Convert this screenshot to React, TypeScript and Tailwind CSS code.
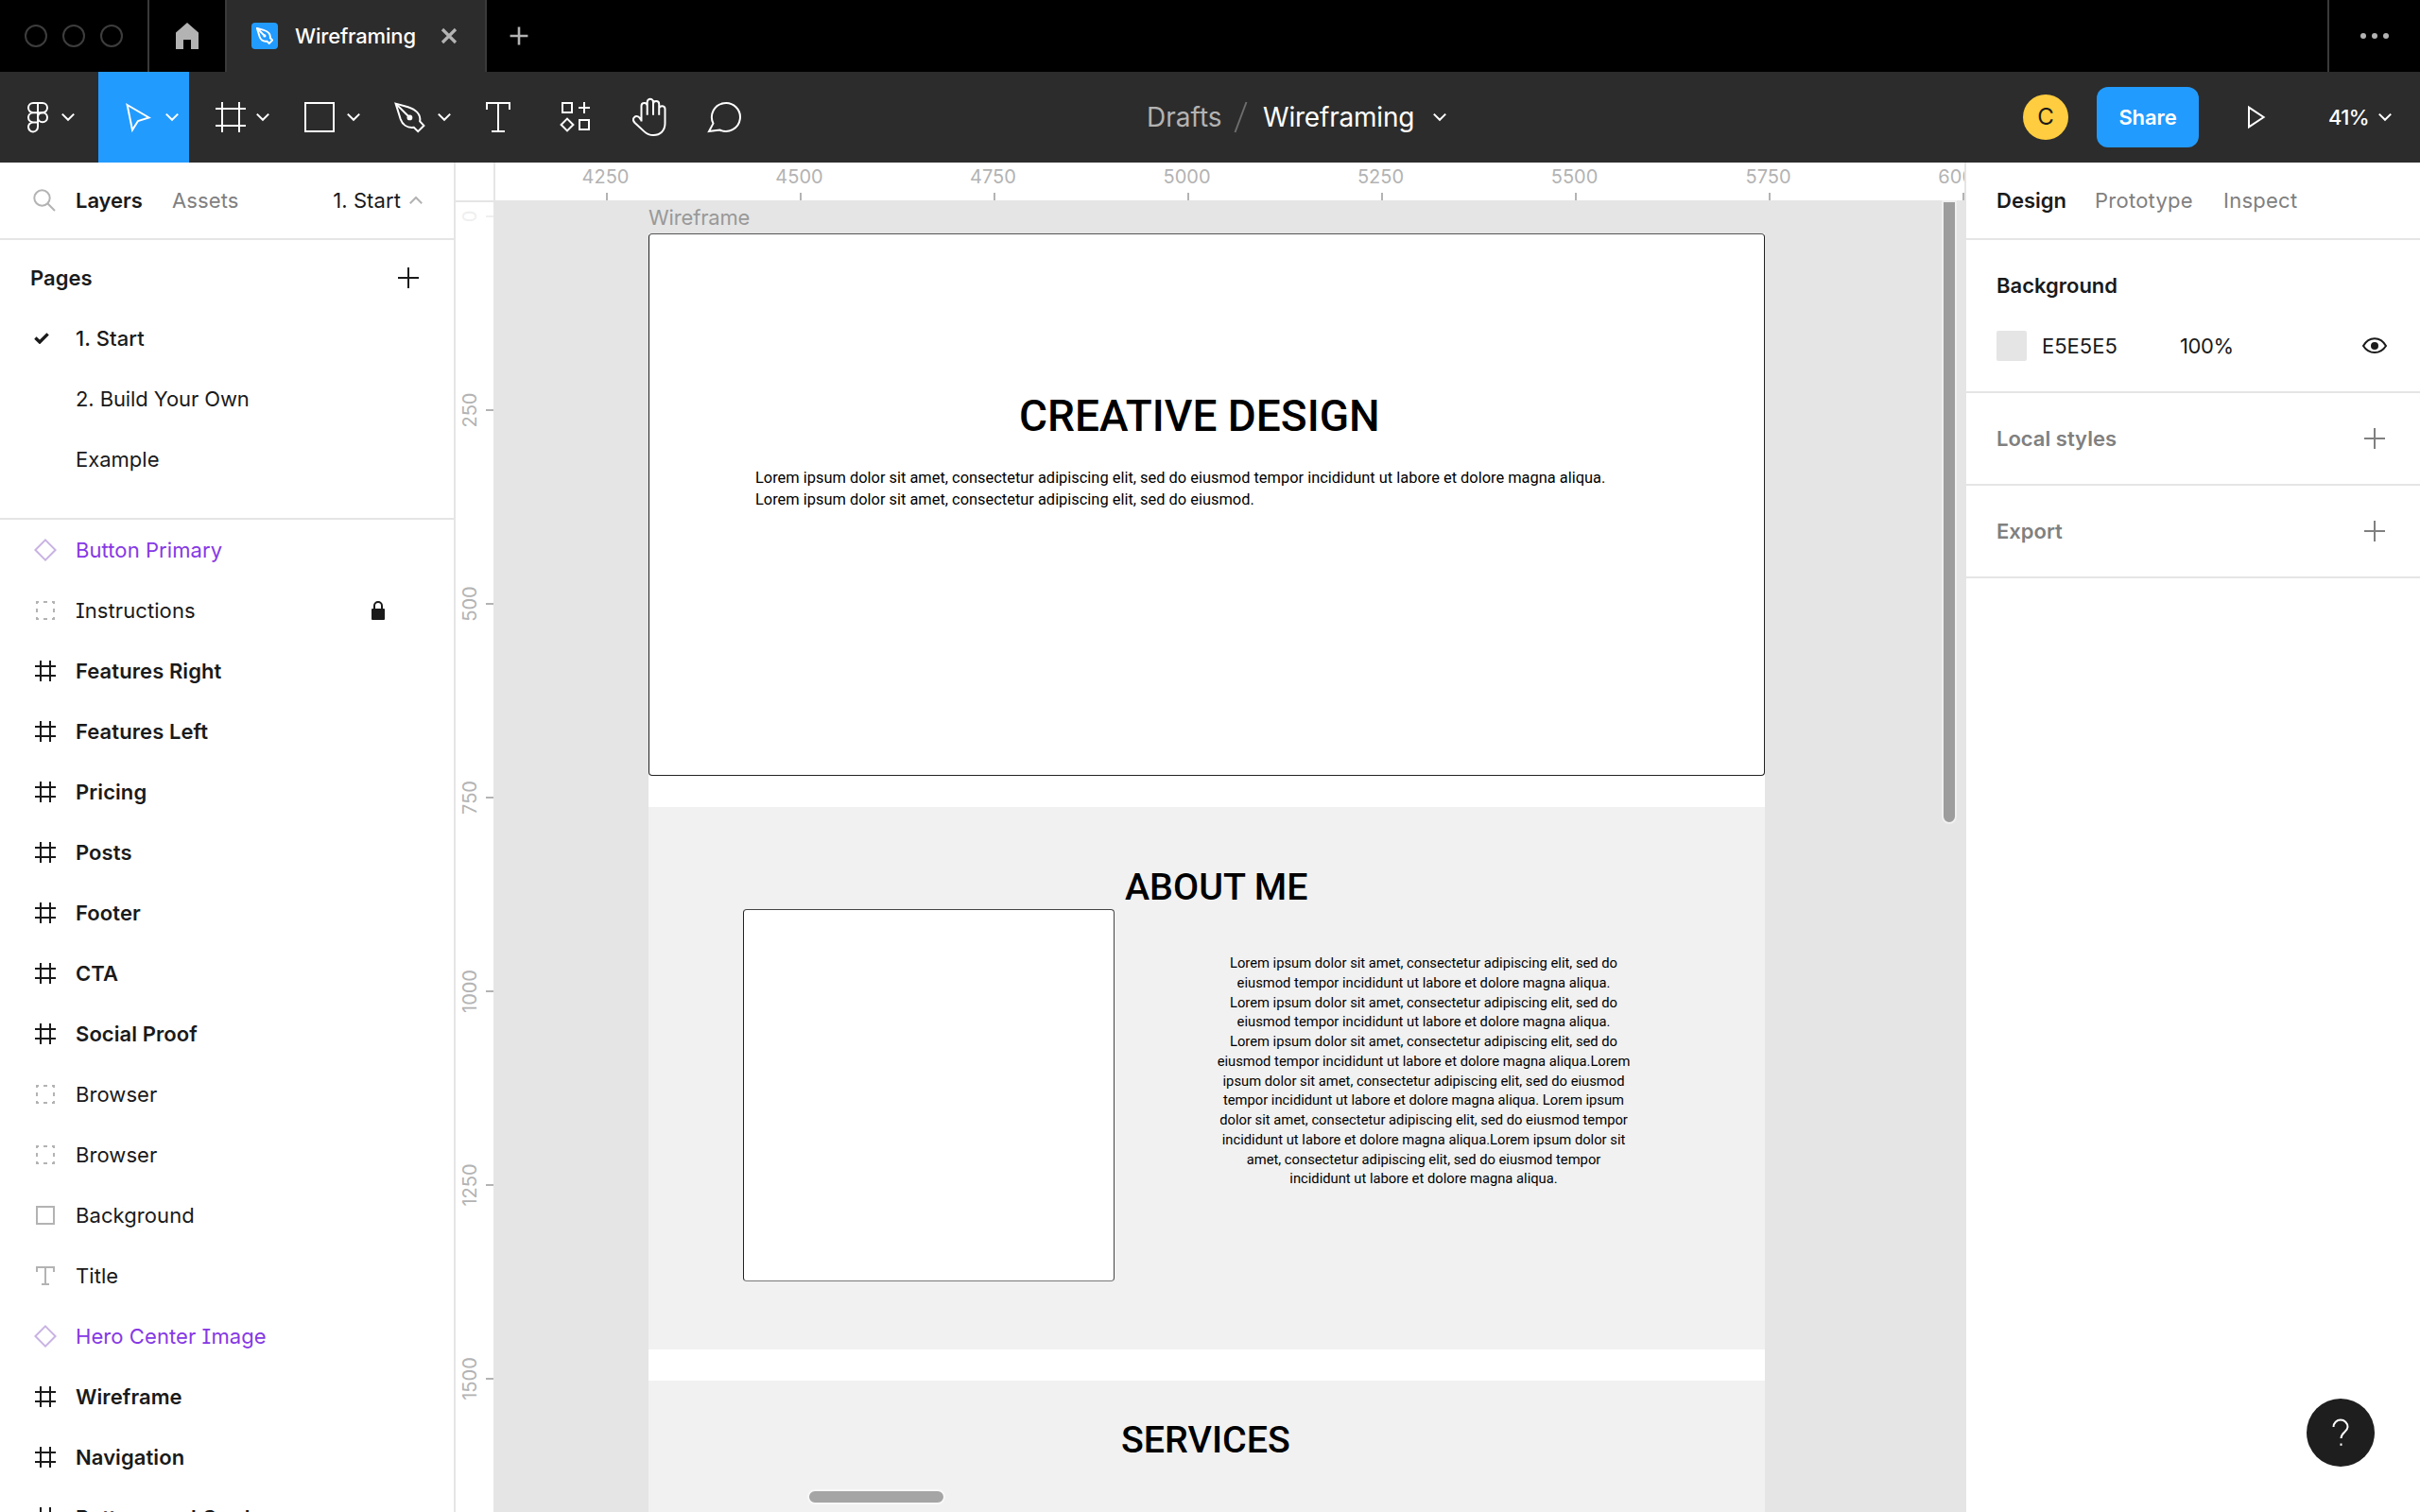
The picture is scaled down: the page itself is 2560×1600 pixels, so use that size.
import type { ReactNode } from "react";

type IconProps = { box: string; className: string; children: ReactNode };

function Icon({ box, className, children }: IconProps) {
  return (
    <svg viewBox={box} className={className} fill="none" stroke="currentColor" strokeWidth={2}>
      {children}
    </svg>
  );
}

function Chevron({ className = "" }: { className?: string }) {
  return (
    <Icon box="0 0 16 10" className={"h-[10px] w-[16px] shrink-0 " + className}>
      <path d="M1.8 1.6 8 7.8l6.2-6.2" />
    </Icon>
  );
}

function PenShape() {
  return (
    <>
      <path d="M1.6 1.6 14.6 5.3C22.6 7.8 28.3 13 27.2 20.4L31.4 24.9 25.2 31.1 20.8 26.8C13.4 27.8 8.6 23.4 6.6 17.8Z" />
      <path d="M1.6 1.6 16 16" />
      <circle cx="16.4" cy="16.4" r="2.9" fill="currentColor" stroke="none" />
    </>
  );
}

function TabBar() {
  return (
    <header className="flex h-[76px] shrink-0 bg-black text-[#b3b3b3]">
      <div className="flex w-[158px] items-center gap-[16px] border-r-2 border-[#3a3a3a] pl-[26px]">
        <span className="size-[24px] rounded-full border-2 border-[#3d3d3d]" />
        <span className="size-[24px] rounded-full border-2 border-[#3d3d3d]" />
        <span className="size-[24px] rounded-full border-2 border-[#3d3d3d]" />
      </div>
      <div className="flex w-[82px] items-center justify-center border-r-2 border-[#3a3a3a]">
        <svg viewBox="0 0 24 28" className="h-[28px] w-[24px]" fill="currentColor">
          <path d="M12 0 24 10.5V28H16V18H8V28H0V10.5Z" />
        </svg>
      </div>
      <div className="flex w-[275px] items-center border-r-2 border-[#3a3a3a] bg-[#2c2c2c] pl-[26px]">
        <div className="flex size-[28px] items-center justify-center rounded-[4px] bg-[#229bff] text-white">
          <svg viewBox="0 0 33 33" className="size-[18px]" fill="none" stroke="currentColor" strokeWidth={3.6}>
            <PenShape />
          </svg>
        </div>
        <span className="ml-[18px] w-[128px] whitespace-nowrap text-[22px] font-medium tracking-[-0.18px] text-white">
          Wireframing
        </span>
        <Icon box="0 0 18 18" className="ml-[26px] size-[18px]">
          <path d="M2 2 16 16M16 2 2 16" strokeWidth={3.2} />
        </Icon>
      </div>
      <Icon box="0 0 20 20" className="ml-[24px] size-[20px] self-center">
        <path d="M10 .6V19.4M.6 10H19.4" strokeWidth={2.6} />
      </Icon>
      <div className="ml-auto flex w-[98px] items-center gap-[6px] border-l-2 border-[#3a3a3a] pl-[33px]">
        <span className="size-[6px] rounded-full bg-[#b3b3b3]" />
        <span className="size-[6px] rounded-full bg-[#b3b3b3]" />
        <span className="size-[6px] rounded-full bg-[#b3b3b3]" />
      </div>
    </header>
  );
}

function Toolbar() {
  return (
    <div className="flex h-[96px] shrink-0 items-center bg-[#2c2c2c] text-white">
      <div className="flex h-full w-[104px] items-center pl-[28px]">
        <Icon box="28 107 24 34" className="h-[34px] w-[24px]">
          <path d="M35.1 109H44.9A5.1 5.1 0 0 1 44.9 119.2H35.1A5.1 5.1 0 0 1 35.1 109ZM40 109V134.3A5 5 0 1 1 35.1 129.4H40M35.1 119.2A5.1 5.1 0 0 0 35.1 129.4" />
          <circle cx="45" cy="124.3" r="5" />
        </Icon>
        <Chevron className="ml-[12px]" />
      </div>
      <div className="flex h-full w-[96px] items-center bg-[#229bff] pl-[28px]">
        <Icon box="132 107 28 34" className="h-[34px] w-[28px]">
          <path d="M134.6 111 157.6 124.5 146 128 140 137.6Z" />
        </Icon>
        <Chevron className="ml-[14px]" />
      </div>
      <div className="flex h-full w-[96px] items-center pl-[28px]">
        <Icon box="228 108 32 32" className="size-[32px]">
          <path d="M228 115H260M228 133H260M235 108V140M253 108V140" />
        </Icon>
        <Chevron className="ml-[10px]" />
      </div>
      <div className="flex h-full w-[96px] items-center pl-[26px]">
        <Icon box="0 0 32 32" className="size-[32px]">
          <path d="M1 1H31V31H1Z" />
        </Icon>
        <Chevron className="ml-[12px]" />
      </div>
      <div className="flex h-full w-[96px] items-center pl-[25px]">
        <Icon box="0 0 33 33" className="size-[33px]">
          <PenShape />
        </Icon>
        <Chevron className="ml-[12px]" />
      </div>
      <div className="flex w-[80px] justify-center pr-[2px]">
        <Icon box="0 0 26 32" className="h-[32px] w-[26px]">
          <path d="M1 8V1H25V8M13 1V31M6 31H20" />
        </Icon>
      </div>
      <div className="flex w-[80px] justify-center">
        <Icon box="592 107 32 34" className="h-[34px] w-[32px]">
          <path d="M595 109H605V119H595ZM618 108V120M612 114H624M613 127H623V137H613ZM600 125.6 606.4 132 600 138.4 593.6 132Z" />
        </Icon>
      </div>
      <div className="flex w-[80px] justify-center pr-[2px]">
        <Icon box="669 103 36 42" className="h-[42px] w-[36px]">
          <path d="M678.5 128.5V112A3.1 3.1 0 0 1 684.7 112M684.7 121.8V108A3.1 3.1 0 0 1 691 108V121.8M691 110A3.1 3.1 0 0 1 697.2 110V121.8M697.2 115.3A3.1 3.1 0 0 1 703.5 115.3V130.5C703.5 138.4 698.3 143 691.3 143 687.4 143 684.4 142 682 139.6L671.6 130C667.4 125.6 672.6 120.6 676.4 124.4L678.5 127.5" />
        </Icon>
      </div>
      <div className="flex w-[80px] justify-center pr-[4px]">
        <Icon box="748 107 37 34" className="h-[34px] w-[37px]">
          <path d="M754.5 130.6A15 15 0 1 1 761.5 137.5L750 139Z" />
        </Icon>
      </div>
      <div className="ml-[405px] flex items-center text-[28px]">
        <span className="w-[79px] text-[#b3b3b3]">Drafts</span>
        <Icon box="0 0 16 34" className="ml-[13px] h-[34px] w-[16px] text-[#6e6e6e]">
          <path d="M1.5 33 13.5 1" />
        </Icon>
        <span className="ml-[15px] w-[159px] whitespace-nowrap tracking-[-0.2px]">Wireframing</span>
        <Chevron className="ml-[20px]" />
      </div>
      <div className="ml-auto flex items-center">
        <span className="flex size-[48px] items-center justify-center rounded-full bg-[#ffcd3f] text-[24px] text-[#1a1a1a]">C</span>
        <span className="ml-[30px] flex h-[64px] w-[108px] items-center justify-center rounded-[12px] bg-[#229bff] text-[22px] font-semibold tracking-[-0.1px]">
          Share
        </span>
        <Icon box="0 0 20 26" className="ml-[51px] h-[26px] w-[20px]">
          <path d="M2 2.6 17.6 13 2 23.4Z" />
        </Icon>
        <span className="ml-[66px] w-[42px] whitespace-nowrap text-[22px] font-medium tracking-[-0.6px]">41%</span>
        <Chevron className="mr-[29px] ml-[10px]" />
      </div>
    </div>
  );
}

type Kind = "component" | "group" | "frame" | "rect" | "text";

const layers: { name: string; kind: Kind; locked?: boolean }[] = [
  { name: "Button Primary", kind: "component" },
  { name: "Instructions", kind: "group", locked: true },
  { name: "Features Right", kind: "frame" },
  { name: "Features Left", kind: "frame" },
  { name: "Pricing", kind: "frame" },
  { name: "Posts", kind: "frame" },
  { name: "Footer", kind: "frame" },
  { name: "CTA", kind: "frame" },
  { name: "Social Proof", kind: "frame" },
  { name: "Browser", kind: "group" },
  { name: "Browser", kind: "group" },
  { name: "Background", kind: "rect" },
  { name: "Title", kind: "text" },
  { name: "Hero Center Image", kind: "component" },
  { name: "Wireframe", kind: "frame" },
  { name: "Navigation", kind: "frame" },
  { name: "Buttons and Cards", kind: "frame" },
];

function LayerIcon({ kind }: { kind: Kind }) {
  const box = "0 0 24 24";
  switch (kind) {
    case "component":
      return (
        <Icon box={box} className="size-[24px] text-[#c9b3e3]">
          <path d="M12 1.4 22.6 12 12 22.6 1.4 12Z" />
        </Icon>
      );
    case "group":
      return (
        <Icon box={box} className="size-[24px] text-[#b3b3b3]">
          <path d="M2 3H5M10 3H14M19 3H22M2 21H5M10 21H14M19 21H22M3 2V5M3 10V14M3 19V22M21 2V5M21 10V14M21 19V22" />
        </Icon>
      );
    case "frame":
      return (
        <Icon box={box} className="size-[24px]">
          <path d="M1 7H23M1 17H23M7 1V23M17 1V23" />
        </Icon>
      );
    case "rect":
      return (
        <Icon box={box} className="size-[24px] text-[#b3b3b3]">
          <path d="M3 3H21V21H3Z" />
        </Icon>
      );
    case "text":
      return (
        <Icon box={box} className="size-[24px] text-[#b3b3b3]">
          <path d="M3 8V3H21V8M12 3V21M8 21H16" />
        </Icon>
      );
  }
}

function Plus() {
  return (
    <Icon box="0 0 22 22" className="size-[22px]">
      <path d="M11 0V22M0 11H22" />
    </Icon>
  );
}

function LeftPanel() {
  return (
    <aside className="flex w-[482px] shrink-0 flex-col overflow-hidden border-r-2 border-[#e5e5e5] bg-white text-[22px] text-[#1a1a1a]">
      <div className="flex h-[82px] shrink-0 items-center border-b-2 border-[#e5e5e5] pl-[35px]">
        <Icon box="0 0 24 24" className="size-[24px] text-[#b3b3b3]">
          <circle cx="9.5" cy="9.5" r="8.2" />
          <path d="M15.3 15.3 23 23" />
        </Icon>
        <span className="ml-[21px] w-[102px] font-semibold tracking-[-0.05px]">Layers</span>
        <span className="tracking-[0.1px] text-[#808080]">Assets</span>
        <span className="mr-[8px] ml-auto tracking-[0.1px]">1. Start</span>
        <Icon box="0 0 16 10" className="mr-[32px] h-[10px] w-[16px] text-[#b3b3b3]">
          <path d="M1.8 8.2 8 2l6.2 6.2" />
        </Icon>
      </div>
      <div className="h-[296px] shrink-0 border-b-2 border-[#e5e5e5] pt-[8px]">
        <div className="flex h-[64px] items-center justify-between pr-[37px] pl-[32px]">
          <span className="font-semibold">Pages</span>
          <Plus />
        </div>
        <div className="flex h-[64px] items-center pl-[36px]">
          <Icon box="0 0 16 12" className="h-[12px] w-[16px]">
            <path d="M1.4 5.6 6 10 14.6 1.4" strokeWidth={3.4} />
          </Icon>
          <span className="ml-[28px] font-medium tracking-[0.1px]">1. Start</span>
        </div>
        <div className="flex h-[64px] items-center pl-[80px] tracking-[-0.1px]">2. Build Your Own</div>
        <div className="flex h-[64px] items-center pl-[80px]">Example</div>
      </div>
      <ul className="tracking-[0.08px] [font-feature-settings:'cv08'_1]">
        {layers.map((l, i) => (
          <li
            key={i}
            className={
              "flex h-[64px] items-center pr-[73px] pl-[36px] whitespace-nowrap " +
              (l.kind === "frame" ? "font-semibold" : l.kind === "component" ? "text-[#8638e5]" : "")
            }
          >
            <LayerIcon kind={l.kind} />
            <span className="ml-[20px]">{l.name}</span>
            {l.locked && (
              <svg viewBox="0 0 14 20" className="ml-auto h-[20px] w-[14px]" fill="currentColor">
                <path d="M1 8H13A1 1 0 0 1 14 9V19A1 1 0 0 1 13 20H1A1 1 0 0 1 0 19V9A1 1 0 0 1 1 8Z" />
                <path d="M3 9V5A4 4 0 0 1 11 5V9" fill="none" stroke="currentColor" strokeWidth={2} />
              </svg>
            )}
          </li>
        ))}
      </ul>
    </aside>
  );
}

const xMarks = [4250, 4500, 4750, 5000, 5250, 5500, 5750, 6000];
const yMarks = [0, 250, 500, 750, 1000, 1250, 1500];

function RulerY() {
  return (
    <div className="flex w-[40px] shrink-0 flex-col overflow-hidden bg-white text-[20px] text-[#b3b3b3]">
      <div className="z-10 h-[42px] shrink-0 border-b-2 border-[#e5e5e5] bg-white" />
      <div className="-mt-[88px]">
        {yMarks.map((m) => (
          <div key={m} className={"flex h-[205px] items-center justify-between " + (m === 0 ? "text-[#efefef]" : "")}>
            <div className="flex w-[30px] justify-center">
              <span className="-rotate-90 leading-[30px]">{m}</span>
            </div>
            <span className="h-[2px] w-[8px] bg-current" />
          </div>
        ))}
      </div>
    </div>
  );
}

function RulerX() {
  return (
    <div className="h-[40px] shrink-0 overflow-hidden border-r-2 border-l-2 border-[#e5e5e5] bg-white text-[20px] text-[#b3b3b3]">
      <div className="ml-[15px] flex h-full w-[1640px]">
        {xMarks.map((m) => (
          <div key={m} className="flex w-[205px] flex-col items-center justify-between">
            <span className="pr-[2px] leading-[30px]">{m}</span>
            <span className="h-[8px] w-[2px] bg-current" />
          </div>
        ))}
      </div>
    </div>
  );
}

const aboutLines = [
  "Lorem ipsum dolor sit amet, consectetur adipiscing elit, sed do",
  "eiusmod tempor incididunt ut labore et dolore magna aliqua.",
  "Lorem ipsum dolor sit amet, consectetur adipiscing elit, sed do",
  "eiusmod tempor incididunt ut labore et dolore magna aliqua.",
  "Lorem ipsum dolor sit amet, consectetur adipiscing elit, sed do",
  "eiusmod tempor incididunt ut labore et dolore magna aliqua.Lorem",
  "ipsum dolor sit amet, consectetur adipiscing elit, sed do eiusmod",
  "tempor incididunt ut labore et dolore magna aliqua. Lorem ipsum",
  "dolor sit amet, consectetur adipiscing elit, sed do eiusmod tempor",
  "incididunt ut labore et dolore magna aliqua.Lorem ipsum dolor sit",
  "amet, consectetur adipiscing elit, sed do eiusmod tempor",
  "incididunt ut labore et dolore magna aliqua.",
];

function Canvas() {
  return (
    <main className="relative h-[1388px] overflow-hidden bg-[#e5e5e5] pl-[164px]">
      <div className="h-[35px] pt-[1px] text-[22px] leading-[34px] tracking-[-0.15px] text-[#999]">Wireframe</div>
      <div className="w-[1181px] bg-white font-[Roboto] text-black">
        <section className="h-[574px] rounded-[4px] border border-t-[#555] border-r-[#222] border-b-[#222] border-l-[#222] pt-[165px]">
          <h1 className="pl-[391px] text-[46px] leading-[54px] font-medium">CREATIVE DESIGN</h1>
          <p className="mt-[27px] pl-[112px] text-[16.41px] leading-[23px] whitespace-nowrap">
            Lorem ipsum dolor sit amet, consectetur adipiscing elit, sed do eiusmod tempor incididunt ut labore et dolore magna aliqua.
            <br />
            Lorem ipsum dolor sit amet, consectetur adipiscing elit, sed do eiusmod.
          </p>
        </section>
        <section className="mt-[33px] h-[574px] bg-[#f1f1f1] pt-[62px]">
          <h2 className="pl-[504px] text-[39.4px] leading-[46px] font-medium">ABOUT ME</h2>
          <div className="flex pl-[100px]">
            <div className="h-[394px] w-[393px] rounded-[4px] border border-t-[#444] border-r-[#444] border-b-[#777] border-l-[#222] bg-white" />
            <div className="mt-[47px] ml-[102px] w-[450px] text-center text-[14.76px] leading-[20.76px] whitespace-nowrap">
              {aboutLines.map((line, i) => (
                <div key={i}>{line}</div>
              ))}
            </div>
          </div>
        </section>
        <section className="mt-[33px] h-[139px] bg-[#f1f1f1] pt-[40px]">
          <h2 className="pl-[500px] text-[39.4px] leading-[46px] font-medium">SERVICES</h2>
        </section>
      </div>
      <div className="absolute top-0 right-[10px] h-[660px] w-[16px] rounded-b-full border-2 border-[#f0f0f0] bg-[#9d9d9d]" />
      <div className="absolute bottom-[8px] left-[332px] h-[16px] w-[146px] rounded-full border-2 border-[#f8f8f8] bg-[#a5a5a5]" />
    </main>
  );
}

function RightPanel() {
  return (
    <aside className="relative w-[480px] shrink-0 bg-white text-[22px] text-[#1a1a1a]">
      <div className="flex h-[82px] items-center border-b-2 border-[#e5e5e5] pl-[32px]">
        <span className="w-[104px] font-semibold">Design</span>
        <span className="w-[136px] tracking-[0.25px] text-[#808080]">Prototype</span>
        <span className="tracking-[0.25px] text-[#808080]">Inspect</span>
      </div>
      <div className="h-[162px] border-b-2 border-[#e5e5e5] pt-[16px]">
        <div className="flex h-[64px] items-center pl-[32px] font-semibold">Background</div>
        <div className="flex h-[64px] items-center pl-[32px]">
          <span className="size-[32px] rounded-[2px] bg-[#e5e5e5]" />
          <span className="ml-[16px] w-[146px]">E5E5E5</span>
          <span className="tracking-[-0.4px]">100%</span>
          <Icon box="0 0 28 20" className="mr-[34px] ml-auto h-[20px] w-[28px]">
            <path d="M2 10C8-.4 20-.4 26 10 20 19.4 8 19.4 2 10Z" />
            <circle cx="14" cy="10" r="4" fill="currentColor" stroke="none" />
          </Icon>
        </div>
      </div>
      <div className="flex h-[98px] items-center justify-between border-b-2 border-[#e5e5e5] pr-[37px] pl-[32px] font-semibold text-[#808080]">
        Local styles
        <Plus />
      </div>
      <div className="flex h-[98px] items-center justify-between border-b-2 border-[#e5e5e5] pr-[37px] pl-[32px] font-semibold text-[#808080]">
        Export
        <Plus />
      </div>
      <div className="absolute right-[48px] bottom-[48px] flex size-[72px] items-center justify-center rounded-full bg-[#1e1e1e] text-white">
        <Icon box="0 0 18 30" className="h-[30px] w-[18px]">
          <path d="M1.5 9A7.5 7.5 0 0 1 16.5 9C16.5 14 9.5 14.5 9.5 21M9.5 26.5V28.8" />
        </Icon>
      </div>
    </aside>
  );
}

export default function App() {
  return (
    <div className="flex h-[1600px] w-[2560px] flex-col overflow-hidden bg-white font-[Inter,sans-serif]">
      <TabBar />
      <Toolbar />
      <div className="flex min-h-0 grow">
        <LeftPanel />
        <RulerY />
        <div className="flex w-[1558px] shrink-0 flex-col">
          <RulerX />
          <Canvas />
        </div>
        <RightPanel />
      </div>
    </div>
  );
}
